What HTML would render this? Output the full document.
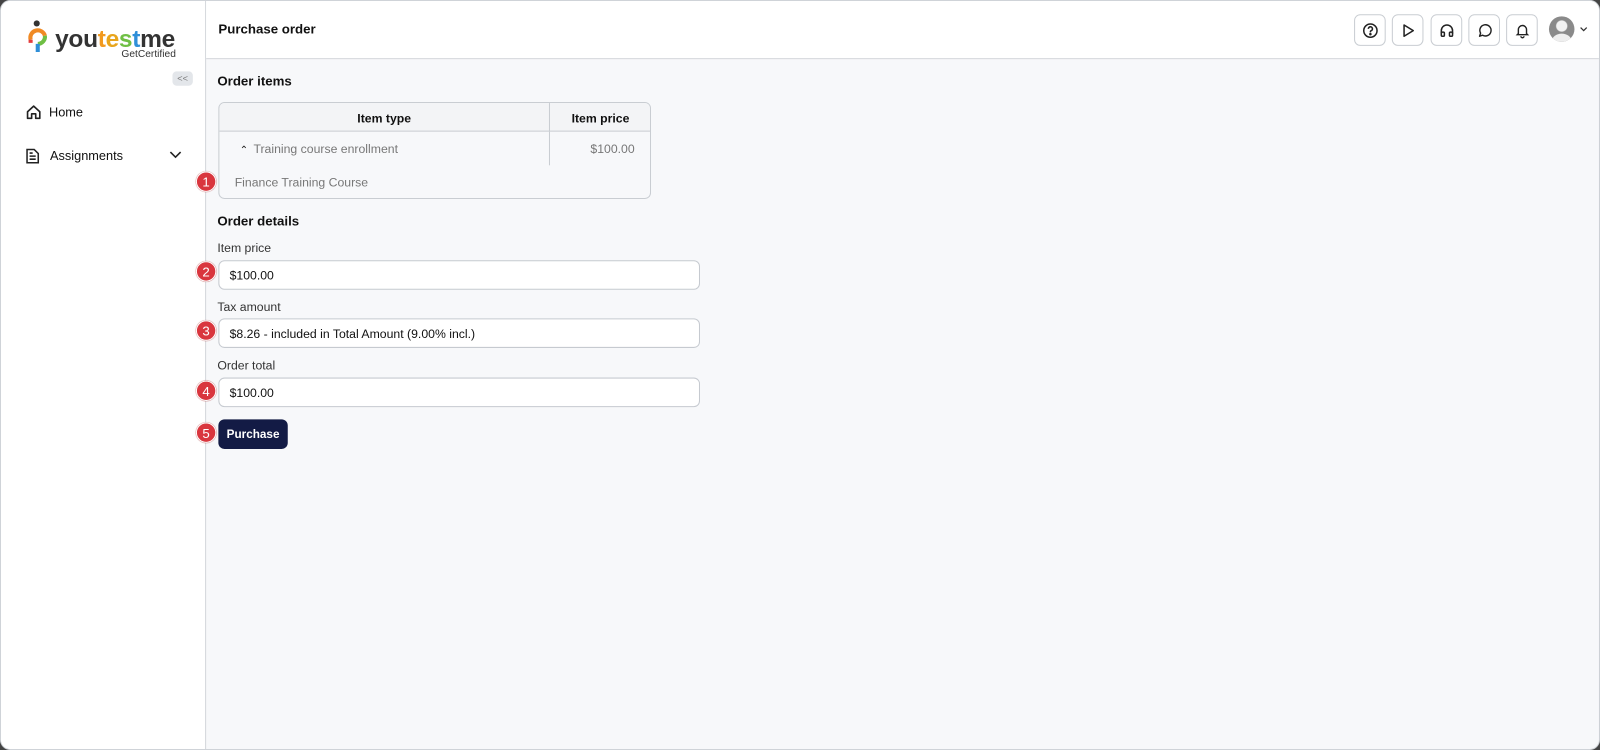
<!DOCTYPE html>
<html><head><meta charset="utf-8"><style>
*{box-sizing:border-box;margin:0;padding:0}
body{width:1600px;height:750px;overflow:hidden;font-family:"Liberation Sans",Arial,sans-serif;background:#444;}
.wrap{position:absolute;left:0;top:0;width:1568px;height:735px;transform:scale(1.0204);transform-origin:0 0}
.frame{position:absolute;left:0;top:0;width:1568px;height:735px;background:#f7f8fa;border:1px solid #cfd3d8;border-radius:10px;overflow:hidden}
.side{position:absolute;left:0;top:0;width:201px;height:735px;background:#fff;border-right:1px solid #d3d6db}
.head{position:absolute;left:201px;top:0;right:0;height:57px;background:#fff;border-bottom:1px solid #d3d6db}
.title{position:absolute;left:12px;top:20px;font-size:13px;font-weight:bold;color:#111}
.ib{position:absolute;top:13px;width:31px;height:31px;border:1px solid #c9cdd2;border-radius:6px;background:#fff;display:flex;align-items:center;justify-content:center}
.h2{position:absolute;font-size:13px;font-weight:bold;color:#111}
.lbl{position:absolute;font-size:12px;color:#333}
.inp{position:absolute;left:213px;width:472px;height:29px;border:1px solid #c6cad0;border-radius:6px;background:#fff;font-size:12px;color:#111;padding:7px 10px}
.badge{position:absolute;width:20px;height:20px;border-radius:50%;background:#d9363e;color:#fff;font-size:13px;display:flex;align-items:center;justify-content:center;border:1px solid #fff;box-shadow:0 0 1px #900}
</style></head><body><div class="wrap"><div class="frame">
<div class="side">
 <svg style="position:absolute;left:26px;top:18px" width="22" height="40" viewBox="0 0 22 40">
  <circle cx="9" cy="4" r="3" fill="#333"/>
  <path d="M3 20 A7 7 0 0 1 17 16" stroke="#f08a24" stroke-width="4" fill="none"/>
  <path d="M17 16 A7 7 0 0 1 10 24" stroke="#6fbf44" stroke-width="4" fill="none"/>
  <path d="M10 24 L10 32" stroke="#2f8fd8" stroke-width="4"/>
  <path d="M3 20 L3 23" stroke="#e43c3c" stroke-width="4"/>
 </svg>
 <div style="position:absolute;left:53px;top:24px;font-size:24px;font-weight:bold;letter-spacing:-0.3px;color:#333">you<span style="color:#f29a1f">t</span><span style="color:#e8a51c">e</span><span style="color:#6fbf44">s</span><span style="color:#2f8fd8">t</span>me</div>
 <div style="position:absolute;left:118px;top:47px;font-size:10px;color:#333">GetCertified</div>
 <div style="position:absolute;left:168px;top:69px;width:20px;height:14px;border-radius:4px;background:#e3e6ea;font-size:9px;color:#777;text-align:center;line-height:14px">&lt;&lt;</div>
 <svg style="position:absolute;left:24px;top:101px" width="16" height="16" viewBox="0 0 16 16" fill="none" stroke="#222" stroke-width="1.6"><path d="M2 7.5L8 2l6 5.5V14h-4v-4.5H6V14H2z" stroke-linejoin="round"/></svg>
 <div style="position:absolute;left:47px;top:102px;font-size:12.5px;color:#111">Home</div>
 <svg style="position:absolute;left:24px;top:144px" width="14" height="16" viewBox="0 0 14 16" fill="none" stroke="#222" stroke-width="1.5"><path d="M1.5 1.5h7l4 4v9h-11z M4 8h6 M4 11h6 M4 5h3"/></svg>
 <div style="position:absolute;left:48px;top:145px;font-size:12.5px;color:#111">Assignments</div>
 <svg style="position:absolute;left:165px;top:147px" width="12" height="8" viewBox="0 0 12 8" fill="none" stroke="#222" stroke-width="1.6"><path d="M1 1l5 5 5-5"/></svg>
</div>
<div class="head">
 <div class="title">Purchase order</div>
 <div class="ib" style="left:1125px"><svg width="16" height="16" viewBox="0 0 16 16" fill="none" stroke="#222" stroke-width="1.5"><circle cx="8" cy="8" r="6.5"/><path d="M6 6.3a2 2 0 1 1 2.5 1.9c-.4.2-.5.5-.5 1v.5"/><circle cx="8" cy="11.5" r=".5" fill="#222"/></svg></div>
 <div class="ib" style="left:1162px"><svg width="16" height="16" viewBox="0 0 16 16" fill="none" stroke="#222" stroke-width="1.5"><path d="M4 2.5v11l9-5.5z" stroke-linejoin="round"/></svg></div>
 <div class="ib" style="left:1200px"><svg width="16" height="16" viewBox="0 0 16 16" fill="none" stroke="#222" stroke-width="1.5"><path d="M2.5 11V8a5.5 5.5 0 0 1 11 0v3"/><rect x="2.5" y="9.5" width="3" height="4" rx="1"/><rect x="10.5" y="9.5" width="3" height="4" rx="1"/></svg></div>
 <div class="ib" style="left:1237px"><svg width="16" height="16" viewBox="0 0 16 16" fill="none" stroke="#222" stroke-width="1.4"><path d="M3 13.5l1-3a5.5 5.5 0 1 1 2 2z" stroke-linejoin="round"/></svg></div>
 <div class="ib" style="left:1274px"><svg width="16" height="16" viewBox="0 0 16 16" fill="none" stroke="#222" stroke-width="1.4"><path d="M4 11V7a4 4 0 0 1 8 0v4l1 1H3z M6.5 13.5a1.5 1.5 0 0 0 3 0"/></svg></div>
 <div style="position:absolute;left:1316px;top:15px;width:25px;height:25px;border-radius:50%;background:radial-gradient(circle at 50% 38%,#f2f2f2 0 5px,#8a8a8a 6px);overflow:hidden"><div style="position:absolute;left:3px;top:17px;width:19px;height:14px;border-radius:50%;background:#eee"></div></div>
 <svg style="position:absolute;left:1346px;top:25px" width="8" height="5" viewBox="0 0 8 5" fill="none" stroke="#333" stroke-width="1.2"><path d="M1 1l3 3 3-3"/></svg>
</div>
<div class="h2" style="left:212px;top:71px">Order items</div>
<div style="position:absolute;left:213px;top:99px;width:424px;height:95px;border:1px solid #c9cdd2;border-radius:6px;background:#f7f8fa;overflow:hidden">
 <div style="height:28px;border-bottom:1px solid #c9cdd2;background:#f3f4f6;font-size:12px;font-weight:bold;color:#111;position:relative">
  <div style="position:absolute;left:0;width:323px;top:8px;text-align:center">Item type</div>
  <div style="position:absolute;left:323px;top:0;height:28px;border-left:1px solid #c9cdd2;width:100px;text-align:center;padding-top:8px">Item price</div>
 </div>
 <div style="position:absolute;left:323px;top:28px;height:33px;border-left:1px solid #c9cdd2"></div>
 <div style="position:absolute;left:20px;top:38px;font-size:12px;color:#777"><span style="color:#222;font-size:10px;margin-right:5px">&#8963;</span>Training course enrollment</div>
 <div style="position:absolute;right:15px;top:38px;font-size:12px;color:#777">$100.00</div>
 <div style="position:absolute;left:15px;top:71px;font-size:12px;color:#777">Finance Training Course</div>
</div>
<div class="h2" style="left:212px;top:208px">Order details</div>
<div class="lbl" style="left:212px;top:235px">Item price</div>
<div class="inp" style="top:254px">$100.00</div>
<div class="lbl" style="left:212px;top:293px">Tax amount</div>
<div class="inp" style="top:311px">$8.26 - included in Total Amount (9.00% incl.)</div>
<div class="lbl" style="left:212px;top:350px">Order total</div>
<div class="inp" style="top:369px">$100.00</div>
<div style="position:absolute;left:213px;top:410px;width:68px;height:29px;border-radius:6px;background:#131b45;color:#fff;font-size:11.5px;font-weight:bold;display:flex;align-items:center;justify-content:center">Purchase</div>
<div class="badge" style="left:191px;top:167px">1</div>
<div class="badge" style="left:191px;top:255px">2</div>
<div class="badge" style="left:191px;top:313px">3</div>
<div class="badge" style="left:191px;top:372px">4</div>
<div class="badge" style="left:191px;top:413px">5</div>
</div></div></body></html>
